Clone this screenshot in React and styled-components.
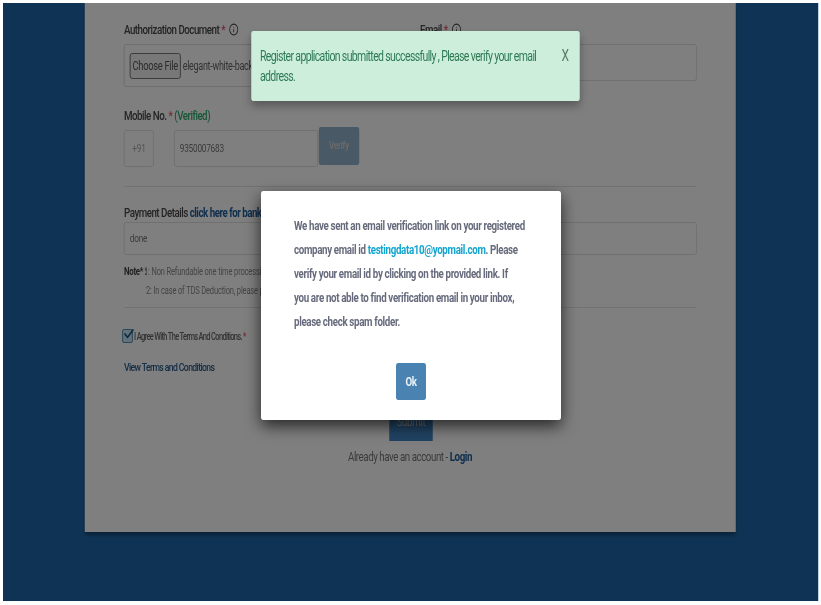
import React from 'react';
import styled, { createGlobalStyle } from 'styled-components';
import { Info, Check } from 'lucide-react';

// the whole screen is squeezed sideways, so widths go through u()
const SQUEEZE = 0.75;
const u = (px) => `${px / SQUEEZE}px`;

const Global = createGlobalStyle`
  html, body { margin: 0; padding: 0; overflow: hidden; background: #fff; }
  * { box-sizing: border-box; }
  body { font-family: Roboto, "Liberation Sans", sans-serif; }
`;

const Screen = styled.div`
  width: ${u(821)};
  height: 605px;
  padding: 3px ${u(3)} 4px;
  transform: scaleX(${SQUEEZE});
  transform-origin: left top;
  filter: blur(0.35px);
`;

const Page = styled.div`
  position: relative;
  height: 100%;
  background: #1f67a9;
  overflow: hidden;
`;

const Panel = styled.div`
  width: ${u(651)};
  height: 529px;
  margin-left: ${u(82)};
  padding: 17px ${u(39)} 0;
  background: #fff;
  box-shadow: 0 3px 4px rgba(0, 0, 0, 0.35);
`;

const Row = styled.div`
  display: grid;
  grid-template-columns: ${u(276)} ${u(277)};
  column-gap: ${u(20)};
`;

const Label = styled.div`
  display: flex;
  align-items: center;
  gap: ${u(4)};
  height: 18px;
  margin-top: ${(p) => p.$top || 0}px;
  font-size: 13px;
  font-weight: 500;
  letter-spacing: -0.65px;
  color: #484848;
  white-space: pre;
`;

const Star = styled.span`
  color: #e05a6a;
`;

const Good = styled.span`
  color: #2fae6c;
`;

const BankLink = styled.span`
  font-weight: 700;
  color: #1f5c99;
`;

const InfoIcon = styled(Info)`
  width: ${u(10)};
  height: 13px;
  color: #444;
`;

const FileBox = styled.div`
  display: flex;
  align-items: center;
  gap: ${u(2)};
  height: 43px;
  margin-top: 6px;
  padding: 0 ${u(5)};
  border: 1px solid #d8d8d8;
  border-radius: 3px;
  overflow: hidden;
`;

const FileButton = styled.span`
  flex: none;
  width: ${u(51)};
  height: 26px;
  line-height: 24px;
  text-align: center;
  font-size: 12.5px;
  letter-spacing: -0.4px;
  white-space: nowrap;
  color: #555;
  background: #f0f0f0;
  border: 1px solid #666;
  border-radius: 3px;
`;

const FileName = styled.span`
  font-size: 12px;
  letter-spacing: -0.4px;
  color: #666;
  white-space: nowrap;
`;

const Field = styled.div`
  height: ${(p) => p.$h}px;
  margin-top: ${(p) => p.$top || 0}px;
  padding: 0 ${u(5)};
  display: flex;
  align-items: center;
  font-size: 11px;
  letter-spacing: -0.3px;
  color: #777;
  border: 1px solid #dcdcdc;
  border-radius: 3px;
`;

const MobileRow = styled.div`
  display: flex;
  align-items: flex-start;
  margin-top: 6px;
`;

const Prefix = styled(Field)`
  width: ${u(30)};
  justify-content: center;
  color: #aaa;
`;

const Phone = styled(Field)`
  width: ${u(144)};
  margin-left: ${u(20)};
`;

const VerifyButton = styled.div`
  width: ${u(40)};
  height: 38px;
  margin: -3px 0 0 ${u(1)};
  line-height: 38px;
  text-align: center;
  font-size: 11px;
  font-weight: 500;
  letter-spacing: -0.3px;
  color: #d6d6d6;
  background: #92b2cc;
  border-radius: 3px;
`;

const Rule = styled.hr`
  height: 1px;
  margin: ${(p) => p.$top}px 0 ${(p) => p.$bottom}px;
  border: 0;
  background: #e4e4e4;
`;

const Note = styled.div`
  display: flex;
  margin-top: 10px;
  height: 19px;
  font-size: 10px;
  letter-spacing: -0.2px;
  line-height: 13px;
  color: #888;
  white-space: nowrap;
`;

const NoteHead = styled.b`
  width: ${u(20)};
  color: #444;
  font-size: 10.5px;
  letter-spacing: -0.4px;
`;

const NoteLine = styled.div`
  margin-left: ${u(22)};
  font-size: 10px;
  letter-spacing: -0.2px;
  line-height: 13px;
  color: #888;
  white-space: nowrap;
`;

const AgreeRow = styled.div`
  display: flex;
  align-items: center;
  gap: ${u(1)};
  margin-left: ${u(-2)};
  font-size: 10px;
  font-weight: 500;
  letter-spacing: -0.9px;
  color: #666;
`;

const Tick = styled.span`
  position: relative;
  display: block;
  width: ${u(11)};
  height: 14px;
  background: #c8e6f4;
  border: 1px solid #3d7fa8;
  border-radius: 2px;
`;

const TickMark = styled(Check)`
  position: absolute;
  left: 0;
  top: -4px;
  width: ${u(12)};
  height: 16px;
  color: #1c5a82;
  stroke-width: 3;
`;

const TermsLink = styled.div`
  margin-top: 17px;
  font-size: 11.5px;
  font-weight: 500;
  letter-spacing: -0.8px;
  color: #2c5a8c;
`;

const SubmitButton = styled.div`
  width: ${u(44)};
  height: 40px;
  margin: 27px 0 0 ${u(265)};
  line-height: 42px;
  text-align: center;
  font-size: 13px;
  letter-spacing: -0.4px;
  color: #ddd;
  background: #4288c6;
`;

const LoginLine = styled.div`
  margin: 8px 0 0 ${u(224)};
  font-size: 13px;
  letter-spacing: -0.6px;
  line-height: 16px;
  color: #777;
`;

const LoginLink = styled.b`
  color: #1f5c99;
  font-weight: 700;
`;

const Backdrop = styled.div`
  position: absolute;
  inset: 0;
  display: flex;
  justify-content: center;
  padding-top: 188px;
  padding-left: ${u(1)};
  background: rgba(0, 0, 0, 0.5);
`;

const Modal = styled.div`
  width: ${u(300)};
  height: 229px;
  padding: 23px ${u(33)} 0;
  background: #fff;
  border-radius: 3px;
  box-shadow: 0 6px 18px rgba(0, 0, 0, 0.7);
`;

const ModalText = styled.p`
  margin: 0;
  font-size: 13px;
  font-weight: 700;
  letter-spacing: -0.45px;
  line-height: 24px;
  color: #666a7c;
`;

const Mail = styled.span`
  color: #12a5cf;
`;

const OkButton = styled.div`
  width: ${u(30)};
  height: 37px;
  margin: 29px auto 0;
  line-height: 37px;
  text-align: center;
  font-size: 13px;
  font-weight: 700;
  letter-spacing: -0.5px;
  color: #e8f1f8;
  background: #4a82b2;
  border-radius: 3px;
`;

const Toast = styled.div`
  position: absolute;
  top: 28px;
  left: ${u(248)};
  width: ${u(329)};
  height: 70px;
  display: flex;
  justify-content: space-between;
  padding: 15px ${u(11)} 0 ${u(9)};
  font-size: 14px;
  letter-spacing: -0.85px;
  line-height: 20px;
  color: #2e7a55;
  background: #cdeedb;
  border-radius: 3px;
  box-shadow: 0 5px 10px rgba(0, 0, 0, 0.3);
`;

const ToastMsg = styled.div`
  width: ${u(285)};
`;

const ToastClose = styled.span`
  font-size: 16px;
  letter-spacing: 0;
  color: #5a7a6a;
`;

export default function App() {
  return (
    <Screen>
      <Global />
      <Page>
        <Panel>
          <Row>
            <div>
              <Label>
                <span>Authorization Document <Star>*</Star></span>
                <InfoIcon />
              </Label>
              <FileBox>
                <FileButton>Choose File</FileButton>
                <FileName>elegant-white-background.jpg</FileName>
              </FileBox>
            </div>
            <div>
              <Label>
                <span>Email <Star>*</Star></span>
                <InfoIcon />
              </Label>
              <Field $h={37} $top={6} />
            </div>
          </Row>
          <Label $top={19}>
            <span>Mobile No. <Star>*</Star> <Good>(Verified)</Good></span>
          </Label>
          <MobileRow>
            <Prefix $h={37}>+91</Prefix>
            <Phone $h={37}>9350007683</Phone>
            <VerifyButton>Verify</VerifyButton>
          </MobileRow>
          <Rule $top={19} $bottom={16} />
          <Label>
            <span>Payment Details <BankLink>click here for bank details</BankLink></span>
          </Label>
          <Field $h={33} $top={1}>done</Field>
          <Note>
            <NoteHead>Note* :</NoteHead>
            <span>1: Non Refundable one time processing fee</span>
          </Note>
          <NoteLine>2: In case of TDS Deduction, please provide</NoteLine>
          <Rule $top={10} $bottom={21} />
          <AgreeRow>
            <Tick><TickMark /></Tick>
            <span>I Agree With The Terms And Conditions. <Star>*</Star></span>
          </AgreeRow>
          <TermsLink>View Terms and Conditions</TermsLink>
          <SubmitButton>Submit</SubmitButton>
          <LoginLine>Already have an account - <LoginLink>Login</LoginLink></LoginLine>
        </Panel>
        <Backdrop>
          <Modal>
            <ModalText>
              We have sent an email verification link on your registered company email id{' '}
              <Mail>testingdata10@yopmail.com</Mail>. Please verify your email id by clicking on the
              provided link. If<br />you are not able to find verification email in your inbox,
              please check spam folder.
            </ModalText>
            <OkButton>Ok</OkButton>
          </Modal>
        </Backdrop>
        <Toast>
          <ToastMsg>Register application submitted successfully , Please verify your email address.</ToastMsg>
          <ToastClose>X</ToastClose>
        </Toast>
      </Page>
    </Screen>
  );
}
